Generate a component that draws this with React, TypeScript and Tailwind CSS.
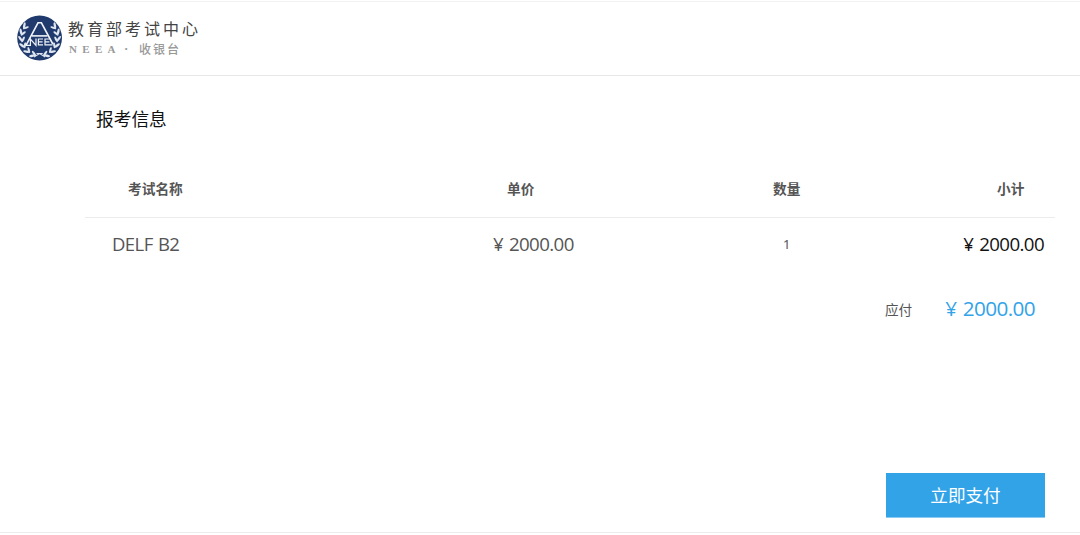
import React from "react";

const leaves = [
  [15, 39.5, -72], [9.6, 35.3, -50], [5.8, 29.5, -25], [4.4, 23, -5], [5.2, 16.5, 18], [8.6, 10.6, 38],
];

function Laurel() {
  return (
    <g fill="#dfe6f0">
      {leaves.map(([x, y, r]) => (
        <g key={y} transform={`translate(${x} ${y}) rotate(${r})`}>
          <ellipse cx="-1.3" cy="0" rx="1.2" ry="3.2" transform="rotate(-28)" />
          <ellipse cx="2.2" cy="0.4" rx="1.1" ry="3.1" transform="rotate(34)" />
        </g>
      ))}
    </g>
  );
}

function Logo() {
  return (
    <svg className="-mt-[2px] h-[46px] w-[46px] shrink-0" viewBox="0 0 46 46">
      <circle cx="22.6" cy="23" r="22.4" fill="#213a6e" />
      <Laurel />
      <g transform="translate(45.2 0) scale(-1 1)">
        <Laurel />
      </g>
      <path d="M17 42 L22.6 38.6 L28.2 42 M19.5 38.5 H25.7" fill="none" stroke="#dfe6f0" strokeWidth="1.1" />
      <g fill="none" stroke="#f0f4fa" strokeWidth="1.6">
        <path d="M9 30.3 L21 7.8 H24.4 L35.8 29" />
        <path d="M15 20.9 H30.5" />
        <path d="M9 30.3 H13.4 V24 L19 30.3 V23.4" strokeWidth="1.2" />
        <path d="M26 24 H21.4 V29.8 H26 M21.4 26.9 H25.6 M32.6 24 H28 V29.8 H35.6 M28 26.9 H32.4" strokeWidth="1.2" />
      </g>
    </svg>
  );
}

function Price({ className }: { className: string }) {
  return (
    <span className={`whitespace-nowrap font-['Open_Sans','Noto_Sans_CJK_SC',sans-serif] [word-spacing:1.6px] ${className}`}>
      ¥ 2000.00
    </span>
  );
}

export default function App() {
  return (
    <div className="flex h-[535px] w-[1080px] flex-col overflow-hidden bg-white pt-px font-['Open_Sans','Noto_Sans_CJK_SC',sans-serif] text-[#555]">
      <header className="flex h-[75px] shrink-0 items-center border-t border-b border-t-[#f3f3f3] border-b-[#e8e8e8] pl-[17px]">
        <Logo />
        <div className="-mt-px ml-[5px] flex flex-col whitespace-nowrap">
          <span className="text-[16px] leading-5 tracking-[3px] text-[#444]">教育部考试中心</span>
          <span className="flex h-[18px] items-center pt-px font-['Liberation_Serif','Noto_Sans_CJK_SC',serif] text-[11px] text-[#999]">
            <span className="w-[56px] pt-px pl-px font-bold tracking-[5.3px]">NEEA</span>
            <span className="w-[15px] pt-px text-[13px] font-bold">·</span>
            <span className="font-['Noto_Sans_CJK_SC',sans-serif] text-[12px] font-medium tracking-[2px]">收银台</span>
          </span>
        </div>
      </header>
      <main className="ml-[85px] flex w-[970px] flex-1 flex-col">
        <h1 className="mt-[30px] pl-[11px] text-[17.7px] leading-[26px] text-[#111]">报考信息</h1>
        <div className="mt-[29px] grid h-[57px] grid-cols-[43px_379px_266px_224px_1fr] items-center border-b border-[#ececec] text-[13.7px] font-bold">
          <span />
          <span>考试名称</span>
          <span>单价</span>
          <span>数量</span>
          <span>小计</span>
        </div>
        <div className="grid h-[52px] grid-cols-[27px_381px_290px_1fr_auto] items-center pr-[11px]">
          <span />
          <span className="text-[18.5px] tracking-[-0.55px] [word-spacing:1px]">DELF B2</span>
          <Price className="text-[18.7px] tracking-[-0.6px]" />
          <span className="pt-px font-['Noto_Sans',sans-serif] text-[13px]">1</span>
          <Price className="text-[18.7px] tracking-[-0.6px] text-[#111]" />
        </div>
        <div className="mt-[24px] flex h-[32px] items-center justify-end pr-[20px]">
          <span className="mr-[33px] pt-px text-[13.6px]">应付</span>
          <Price className="-mt-[2px] text-[20.7px] tracking-[-0.6px] text-[#33a3e8]" />
        </div>
        <button className="mt-auto mr-[10px] mb-[14px] h-[45px] w-[159px] self-end border-b border-[#8ccaf2] bg-[#33a3e8] text-[17.6px] text-white">
          立即支付
        </button>
      </main>
      <footer className="h-[3px] shrink-0 border-t border-[#ececec]" />
    </div>
  );
}
